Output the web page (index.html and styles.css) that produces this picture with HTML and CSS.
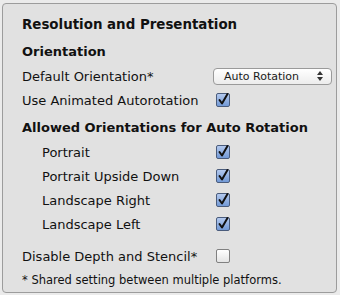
FILE: index.html
```html
<!DOCTYPE html>
<html lang="en">
<head>
    <meta charset="UTF-8">
    <title>Resolution and Presentation</title>
    <link rel="stylesheet" href="styles.css">
</head>
<body>
    <div class="painel">
        <h1 class="titulo">Resolution and Presentation</h1>

        <h2 class="secao">Orientation</h2>
        <div class="linha">
            <span class="rotulo">Default Orientation*</span>
            <div class="popup">
                <span>Auto Rotation</span>
                <svg class="setas" width="6" height="10" viewBox="0 0 6 10">
                    <path d="M0 4 L3 0 L6 4 Z M0 6 L3 10 L6 6 Z" fill="#333"/>
                </svg>
            </div>
        </div>
        <div class="linha">
            <span class="rotulo">Use Animated Autorotation</span>
            <span class="caixa marcada"><svg viewBox="0 0 14 14"><path d="M3.5 7 L6 10.5 L11.5 1"/></svg></span>
        </div>

        <h2 class="secao secao-allowed">Allowed Orientations for Auto Rotation</h2>
        <div class="linha recuo">
            <span class="rotulo">Portrait</span>
            <span class="caixa marcada"><svg viewBox="0 0 14 14"><path d="M3.5 7 L6 10.5 L11.5 1"/></svg></span>
        </div>
        <div class="linha recuo">
            <span class="rotulo">Portrait Upside Down</span>
            <span class="caixa marcada"><svg viewBox="0 0 14 14"><path d="M3.5 7 L6 10.5 L11.5 1"/></svg></span>
        </div>
        <div class="linha recuo">
            <span class="rotulo">Landscape Right</span>
            <span class="caixa marcada"><svg viewBox="0 0 14 14"><path d="M3.5 7 L6 10.5 L11.5 1"/></svg></span>
        </div>
        <div class="linha recuo">
            <span class="rotulo">Landscape Left</span>
            <span class="caixa marcada"><svg viewBox="0 0 14 14"><path d="M3.5 7 L6 10.5 L11.5 1"/></svg></span>
        </div>

        <div class="linha linha-depth">
            <span class="rotulo">Disable Depth and Stencil*</span>
            <span class="caixa"></span>
        </div>
        <p class="nota">* Shared setting between multiple platforms.</p>
    </div>
</body>
</html>
```

FILE: styles.css
```css
*{
    margin: 0;
    padding: 0;
    box-sizing: border-box;
}
body{
    background-color: #ebebeb;
    font-family: "DejaVu Sans", "Liberation Sans", sans-serif;
    color: #111;
    padding: 3px 3px 2px 2px;
}
.painel{
    background-color: #e1e1e1;
    border: 1px solid #9c9c9c;
    border-radius: 4px;
    height: 290px;
    padding: 11px 10px 0 19px;
}
.titulo{
    font-size: 13.4px;
    font-weight: bold;
    line-height: 20px;
}
.secao{
    font-size: 13px;
    font-weight: bold;
    line-height: 24px;
    margin-top: 5px;
}
.secao-allowed{
    margin-top: 4px;
}
.linha{
    display: grid;
    grid-template-columns: 194px auto;
    align-items: center;
    height: 24px;
    font-size: 13px;
}
.recuo .rotulo{
    padding-left: 20px;
}
.linha-depth{
    margin-top: 8px;
}
.caixa{
    width: 14px;
    height: 14px;
    border: 1px solid #808080;
    border-radius: 2px;
    background: linear-gradient(#ffffff, #e4e4e4);
    position: relative;
}
.caixa.marcada{
    border-color: #4a5c7c;
    background: linear-gradient(#b3c9ee, #7199d6);
}
.caixa svg{
    position: absolute;
    left: -1px;
    top: -1px;
    width: 14px;
    height: 14px;
    overflow: visible;
}
.caixa path{
    fill: none;
    stroke: #111;
    stroke-width: 2;
    stroke-linecap: round;
    stroke-linejoin: round;
}
.popup{
    margin-left: -3px;
    width: 119px;
    height: 17px;
    border: 1px solid #9a9a9a;
    border-radius: 4px;
    background: linear-gradient(#ffffff, #ececec);
    display: flex;
    align-items: center;
    justify-content: space-between;
    padding: 0 8px 0 10px;
    font-size: 11px;
    color: #1a1a1a;
}
.nota{
    font-size: 11.5px;
    line-height: 20px;
    margin-top: 2px;
}
```
